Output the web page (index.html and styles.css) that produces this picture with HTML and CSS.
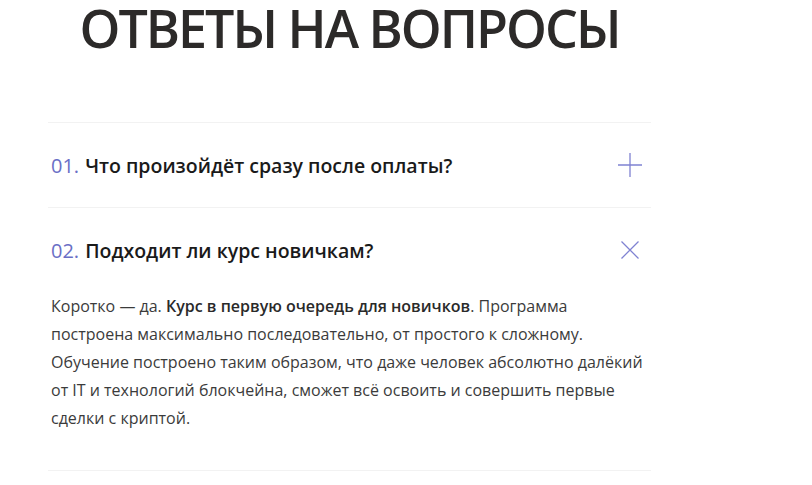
FILE: index.html
```html
<!DOCTYPE html>
<html lang="ru">

<head>
    <meta charset="UTF-8">
    <meta name="viewport" content="width=device-width, initial-scale=1.0">
    <title>Ответы на вопросы</title>
    <link rel="stylesheet" href="styles.css">
</head>

<body>
    <section class="faq">
        <h1 class="faq-title">ОТВЕТЫ НА ВОПРОСЫ</h1>

        <div class="faq-list">
            <div class="faq-item">
                <div class="faq-question">
                    <span class="faq-num">01.</span>
                    <span class="faq-text">Что произойдёт сразу после оплаты?</span>
                    <svg class="faq-icon" width="24" height="24" viewBox="0 0 24 24">
                        <path d="M12 0V24M0 12H24" stroke="#7f82d2" stroke-width="1.3" fill="none"/>
                    </svg>
                </div>
            </div>

            <div class="faq-item open">
                <div class="faq-question">
                    <span class="faq-num">02.</span>
                    <span class="faq-text">Подходит ли курс новичкам?</span>
                    <svg class="faq-icon" width="24" height="24" viewBox="0 0 24 24">
                        <path d="M3.5 3.5L20.5 20.5M20.5 3.5L3.5 20.5" stroke="#7f82d2" stroke-width="1.3" fill="none"/>
                    </svg>
                </div>
                <p class="faq-answer">
                    Коротко — да. <b>Курс в первую очередь для новичков</b>. Программа<br>
                    построена максимально последовательно, от простого к сложному.<br>
                    Обучение построено таким образом, что даже человек абсолютно далёкий<br>
                    от IT и технологий блокчейна, сможет всё освоить и совершить первые<br>
                    сделки с криптой.
                </p>
            </div>
        </div>
    </section>
</body>

</html>
```

FILE: styles.css
```css
body {
    margin: 0;
    background-color: #fff;
    font-family: 'Open Sans', Arial, sans-serif;
    color: #1e1e1e;
}

.faq {
    width: 603px;
    margin-left: 48px;
}

.faq-title {
    margin: 0;
    text-align: center;
    font-size: 52px;
    font-weight: 600;
    line-height: 56px;
    color: #2c2a29;
    letter-spacing: -2px;
}

.faq-list {
    margin-top: 66px;
    border-top: 1px solid #f2f2f2;
}

.faq-item {
    border-bottom: 1px solid #f2f2f2;
}

.faq-question {
    display: flex;
    align-items: center;
    height: 84px;
    padding: 0 9px 0 3px;
    font-size: 19.5px;
}

.faq-num {
    color: #6a6fc6;
    font-size: 20px;
    margin-right: 6px;
}

.faq-text {
    flex: 1;
    font-weight: 600;
    color: #1a1a1a;
}

.faq-answer {
    margin: 0;
    padding: 0 0 38px 3px;
    font-size: 16px;
    line-height: 28px;
    color: #3b3b3b;
    white-space: nowrap;
}

.faq-answer b {
    font-weight: 600;
    color: #2a2a2a;
}
```
